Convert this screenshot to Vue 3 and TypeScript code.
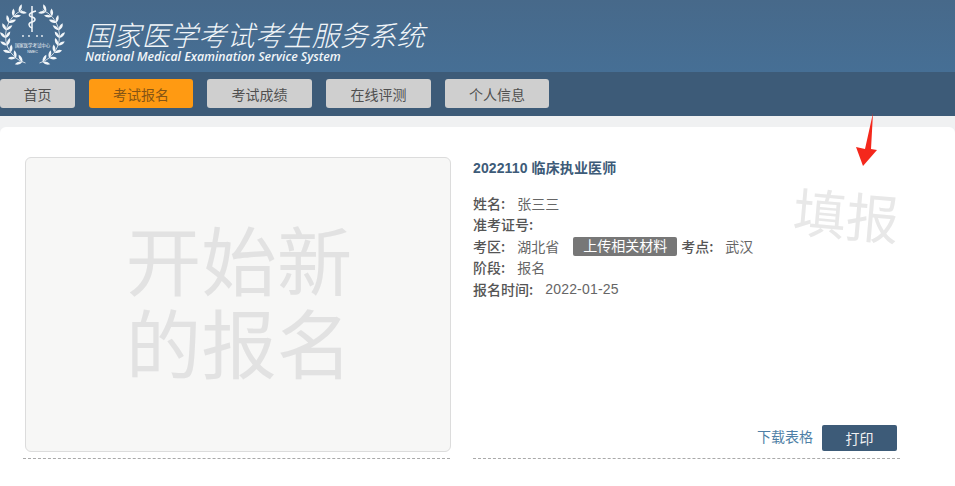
<script setup lang="ts">
const navItems = [
  { label: '首页', width: 75, active: false },
  { label: '考试报名', width: 104, active: true },
  { label: '考试成绩', width: 105, active: false },
  { label: '在线评测', width: 105, active: false },
  { label: '个人信息', width: 104, active: false },
]

const cx = 32.5
const cy = 36
const rx = 27
const ry = 28
const leafNodes = Array.from({ length: 9 }, (_, i) => {
  const phi = ((30 + i * 16) * Math.PI) / 180
  const x = cx - rx * Math.sin(phi)
  const y = cy - ry * Math.cos(phi)
  const angle = (Math.atan2(-ry * Math.sin(phi), rx * Math.cos(phi)) * 180) / Math.PI
  return { x, y, angle }
})
const stemPath = Array.from({ length: 12 }, (_, i) => {
  const phi = ((22 + i * 13) * Math.PI) / 180
  const x = cx - rx * Math.sin(phi)
  const y = cy - ry * Math.cos(phi)
  return `${i === 0 ? 'M' : 'L'}${x.toFixed(1)} ${y.toFixed(1)}`
}).join(' ')
const sides = ['', 'translate(65 0) scale(-1 1)']
</script>

<template>
  <div class="page">
    <header class="banner">
      <svg class="logo" viewBox="0 0 65 68" aria-hidden="true">
        <g v-for="side in sides" :key="side" :transform="side" fill="#f2f6f9">
          <path :d="stemPath" fill="none" stroke="#f2f6f9" stroke-width="0.8" />
          <g v-for="(n, i) in leafNodes" :key="i">
            <path :transform="`translate(${n.x} ${n.y}) rotate(${n.angle - 40})`" d="M0 0 Q4 -2.8 8 0 Q4 2.8 0 0Z" />
            <path :transform="`translate(${n.x} ${n.y}) rotate(${n.angle + 40})`" d="M0 0 Q4 -2.8 8 0 Q4 2.8 0 0Z" />
          </g>
        </g>
        <path d="M32 6 V32" stroke="#f2f6f9" stroke-width="1.5" fill="none" />
        <path d="M36 11 C28 13 28 16 32 17 C36 18 36 21 32 22 C28 23 28 26 32 28" stroke="#f2f6f9" stroke-width="1.5" fill="none" />
        <g fill="#f2f6f9">
          <circle cx="23" cy="36" r="0.9" />
          <circle cx="29" cy="36" r="0.9" />
          <circle cx="37" cy="36" r="0.9" />
          <circle cx="42" cy="36" r="0.9" />
        </g>
        <text x="32.5" y="47" class="logo-cn">国家医学考试中心</text>
        <text x="32.5" y="53" class="logo-en">NMEC</text>
      </svg>
      <div class="titles">
        <div class="title-cn">国家医学考试考生服务系统</div>
        <div class="title-en">National Medical Examination Service System</div>
      </div>
    </header>

    <nav class="nav">
      <a
        v-for="item in navItems"
        :key="item.label"
        class="nav-item"
        :class="{ active: item.active }"
        :style="{ width: item.width + 'px' }"
      >{{ item.label }}</a>
    </nav>

    <div class="strip">
      <main class="content">
        <section class="col col-left">
          <div class="start-card">
            <span>开始新<br />的报名</span>
          </div>
        </section>
        <section class="col col-right">
          <h2 class="exam-title">2022110 临床执业医师</h2>
          <div class="info">
            <div class="row"><b>姓名:</b><span class="val">张三三</span></div>
            <div class="row"><b>准考证号:</b></div>
            <div class="row">
              <b>考区:</b><span class="val">湖北省</span>
              <span class="badge">上传相关材料</span>
              <b>考点:</b><span class="val">武汉</span>
            </div>
            <div class="row"><b>阶段:</b><span class="val">报名</span></div>
            <div class="row"><b>报名时间:</b><span class="val date">2022-01-25</span></div>
          </div>
          <div class="stamp">填报</div>
          <div class="actions">
            <a class="download">下载表格</a>
            <button class="print" type="button">打印</button>
          </div>
        </section>
      </main>
    </div>

    <svg class="arrow" viewBox="0 0 23 55" aria-hidden="true">
      <polygon points="18,1 16,37 22,38 8,54 1,35 10,37" fill="#f4281c" />
    </svg>
  </div>
</template>

<style>
html, body {
  margin: 0;
  background: #fff;
}
</style>

<style scoped>
.page {
  position: relative;
  width: 955px;
  height: 486px;
  overflow: hidden;
  background: #fff;
  font-family: "Liberation Sans", "Noto Sans CJK SC", sans-serif;
}
.banner {
  display: flex;
  align-items: flex-start;
  height: 72px;
  box-sizing: border-box;
  background: linear-gradient(#47698a, #466f95);
}
.logo {
  width: 65px;
  height: 68px;
  flex: none;
}
.logo-cn {
  font-size: 4.4px;
  fill: #f2f6f9;
  text-anchor: middle;
}
.logo-en {
  font-size: 3.6px;
  fill: #f2f6f9;
  text-anchor: middle;
}
.titles {
  margin-left: 20px;
  padding-top: 19px;
  color: #f2f6f9;
}
.title-cn {
  font-family: "Noto Sans CJK SC", sans-serif;
  font-size: 28px;
  font-weight: 300;
  font-style: italic;
  line-height: 30px;
  letter-spacing: 0.32px;
  white-space: nowrap;
}
.title-en {
  margin-top: 1px;
  font-family: "Open Sans", sans-serif;
  font-size: 12.3px;
  font-weight: 600;
  font-style: italic;
  line-height: 14px;
  white-space: nowrap;
}
.nav {
  display: flex;
  gap: 14px;
  height: 44px;
  padding-top: 7px;
  box-sizing: border-box;
  background: #3d5b78;
}
.nav-item {
  display: flex;
  align-items: center;
  justify-content: center;
  height: 29px;
  border-radius: 3px;
  background: #cfcfcf;
  color: #4f4f4f;
  font-size: 14px;
  flex: none;
}
.nav-item.active {
  background: #ff9a12;
  color: #855515;
}
.strip {
  height: 370px;
  padding-top: 11px;
  box-sizing: border-box;
  background: #f0f1f2;
}
.content {
  display: flex;
  gap: 23px;
  height: 359px;
  padding: 30px 0 0 23px;
  box-sizing: border-box;
  border-radius: 6px 6px 0 0;
  background: #fff;
}
.col {
  width: 427px;
  height: 302px;
  box-sizing: border-box;
  border-bottom: 1px dashed #aaa;
  flex: none;
}
.col-left {
  padding-left: 2px;
}
.start-card {
  display: flex;
  align-items: center;
  justify-content: center;
  width: 426px;
  height: 295px;
  padding: 2px 0 0 2px;
  box-sizing: border-box;
  border: 1px solid #dcdcdc;
  border-radius: 6px;
  background: #f7f7f6;
  color: #e2e2e2;
  font-size: 75.5px;
  line-height: 83px;
}
.col-right {
  position: relative;
  display: flex;
  flex-direction: column;
  color: #666;
  font-size: 14px;
}
.exam-title {
  margin: 0;
  padding-top: 3px;
  color: #3d5b78;
  font-size: 14px;
  font-weight: 700;
  line-height: 16px;
  letter-spacing: 0.12px;
}
.info {
  margin-top: 16px;
}
.row {
  display: flex;
  align-items: center;
  height: 21.5px;
}
.info b {
  font-family: "Noto Sans CJK SC", sans-serif;
  color: #555;
  font-weight: 500;
}
.val {
  margin-left: 12px;
}
.date {
  letter-spacing: 0.2px;
}
.badge {
  margin: 2px 4px 0 14px;
  height: 19px;
  padding: 0 10px;
  border-radius: 2px;
  background: #777;
  color: #fff;
  line-height: 19px;
}
.stamp {
  position: absolute;
  top: 30px;
  left: 320px;
  color: #e8e8e8;
  font-size: 53px;
  line-height: 62px;
  white-space: nowrap;
  transform: rotate(5deg);
}
.actions {
  display: flex;
  align-items: center;
  justify-content: flex-end;
  gap: 9px;
  margin-top: auto;
  padding: 0 3px 7px 0;
}
.download {
  margin-top: -4px;
  color: #4f7fa6;
}
.print {
  width: 75px;
  height: 26px;
  padding: 0;
  border: 0;
  border-radius: 2px;
  background: #3d5b78;
  color: #f2f2f2;
  font-family: inherit;
  font-size: 14px;
}
.arrow {
  position: absolute;
  top: 112px;
  left: 855px;
  width: 23px;
  height: 55px;
}
</style>
